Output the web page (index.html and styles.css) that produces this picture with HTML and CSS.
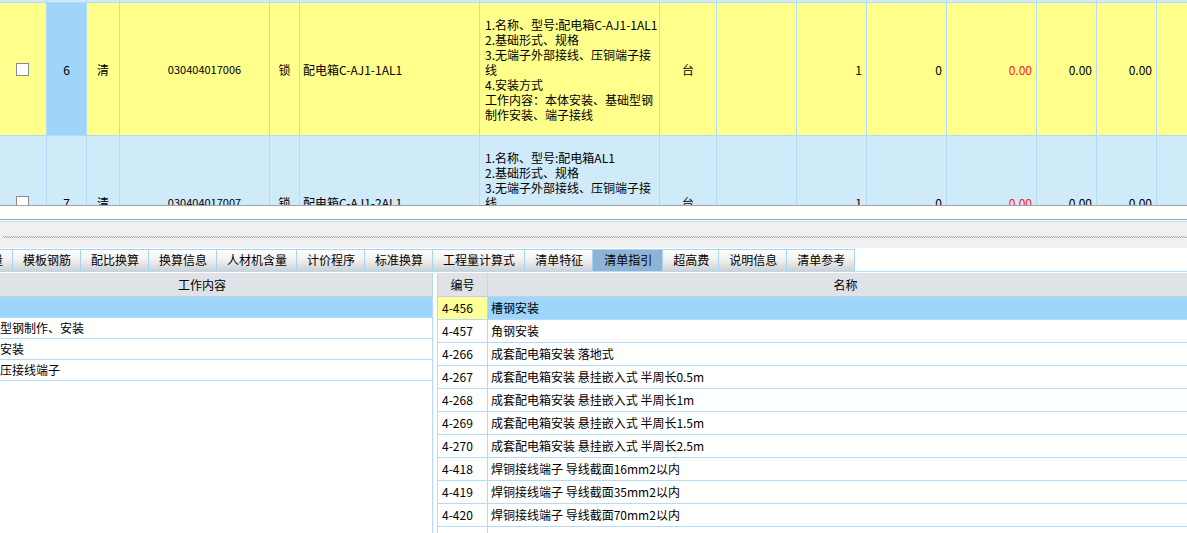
FILE: index.html
```html
<!DOCTYPE html>
<html lang="zh-CN">
<head>
<meta charset="utf-8">
<title>清单指引</title>
<link rel="stylesheet" href="styles.css">
</head>
<body>
<div class="app">
  <div class="grid-top">
    <div class="row row-prev">
      <div class="c"></div><div class="c"></div><div class="c"></div><div class="c"></div><div class="c"></div>
      <div class="c"></div><div class="c"></div><div class="c"></div><div class="c"></div><div class="c"></div>
      <div class="c"></div><div class="c"></div><div class="c"></div><div class="c"></div><div class="c"></div>
    </div>
    <div class="row row-main yellow">
      <div class="c"><span class="chk"></span></div>
      <div class="c no">6</div>
      <div class="c">清</div>
      <div class="c code">030404017006</div>
      <div class="c">锁</div>
      <div class="c left">配电箱C-AJ1-1AL1</div>
      <div class="c feat"><div><span class="nw">1.名称、型号:配电箱C-AJ1-1AL1</span><br>2.基础形式、规格<br>3.无端子外部接线、压铜端子接线<br>4.安装方式<br>工作内容：本体安装、基础型钢制作安装、端子接线</div></div>
      <div class="c">台</div>
      <div class="c"></div>
      <div class="c right">1</div>
      <div class="c right">0</div>
      <div class="c right red">0.00</div>
      <div class="c right">0.00</div>
      <div class="c right">0.00</div>
      <div class="c"></div>
    </div>
    <div class="row row-main blue">
      <div class="c"><span class="chk"></span></div>
      <div class="c no">7</div>
      <div class="c">清</div>
      <div class="c code">030404017007</div>
      <div class="c">锁</div>
      <div class="c left">配电箱C-AJ1-2AL1</div>
      <div class="c feat"><div><span class="nw">1.名称、型号:配电箱AL1</span><br>2.基础形式、规格<br>3.无端子外部接线、压铜端子接线<br>4.安装方式<br>工作内容：本体安装、基础型钢制作安装、端子接线</div></div>
      <div class="c">台</div>
      <div class="c"></div>
      <div class="c right">1</div>
      <div class="c right">0</div>
      <div class="c right red">0.00</div>
      <div class="c right">0.00</div>
      <div class="c right">0.00</div>
      <div class="c"></div>
    </div>
  </div>
  <div class="hbar"></div>
  <div class="splitter"><div class="grip"></div></div>
  <div class="tabs">
    <div class="tab">子目工程量</div>
    <div class="tab">模板钢筋</div>
    <div class="tab">配比换算</div>
    <div class="tab">换算信息</div>
    <div class="tab">人材机含量</div>
    <div class="tab">计价程序</div>
    <div class="tab">标准换算</div>
    <div class="tab">工程量计算式</div>
    <div class="tab">清单特征</div>
    <div class="tab active">清单指引</div>
    <div class="tab">超高费</div>
    <div class="tab">说明信息</div>
    <div class="tab">清单参考</div>
  </div>
  <div class="panes">
    <div class="pane-left">
      <div class="hdr">工作内容</div>
      <div class="lrow sel"></div>
      <div class="lrow">基础型钢制作、安装</div>
      <div class="lrow">本体安装</div>
      <div class="lrow">焊、压接线端子</div>
    </div>
    <div class="pane-right">
      <div class="rrow rhdr"><div class="rc">编号</div><div class="rn">名称</div></div>
      <div class="rrow first"><div class="rc">4-456</div><div class="rn">槽钢安装</div></div>
      <div class="rrow"><div class="rc">4-457</div><div class="rn">角钢安装</div></div>
      <div class="rrow"><div class="rc">4-266</div><div class="rn">成套配电箱安装 落地式</div></div>
      <div class="rrow"><div class="rc">4-267</div><div class="rn">成套配电箱安装 悬挂嵌入式 半周长0.5m</div></div>
      <div class="rrow"><div class="rc">4-268</div><div class="rn">成套配电箱安装 悬挂嵌入式 半周长1m</div></div>
      <div class="rrow"><div class="rc">4-269</div><div class="rn">成套配电箱安装 悬挂嵌入式 半周长1.5m</div></div>
      <div class="rrow"><div class="rc">4-270</div><div class="rn">成套配电箱安装 悬挂嵌入式 半周长2.5m</div></div>
      <div class="rrow"><div class="rc">4-418</div><div class="rn">焊铜接线端子 导线截面16mm2以内</div></div>
      <div class="rrow"><div class="rc">4-419</div><div class="rn">焊铜接线端子 导线截面35mm2以内</div></div>
      <div class="rrow"><div class="rc">4-420</div><div class="rn">焊铜接线端子 导线截面70mm2以内</div></div>
      <div class="rfill"><div class="rc"></div></div>
    </div>
  </div>
</div>
</body>
</html>
```

FILE: styles.css
```css
html, body {
  margin: 0;
  padding: 0;
}
body {
  width: 1187px;
  height: 533px;
  overflow: hidden;
  background: #fff;
  color: #000;
  font-family: "Noto Sans CJK SC", "Microsoft YaHei", sans-serif;
  font-size: 12px;
}
.app {
  width: 1187px;
  height: 533px;
  overflow: hidden;
  display: flex;
  flex-direction: column;
}

/* top grid */
.grid-top {
  height: 205px;
  flex: none;
  overflow: hidden;
  border-bottom: 1px solid #a3a3a3;
}
.row {
  display: grid;
  grid-template-columns: 47px 40px 33px 150px 30px 180px 180px 57px 80px 70px 80px 90px 60px 60px 60px;
  width: 1217px;
}
.c {
  box-sizing: border-box;
  border-right: 1px solid #b3dbf5;
  border-bottom: 1px solid #b3dbf5;
  display: flex;
  align-items: center;
  justify-content: center;
  overflow: hidden;
  white-space: nowrap;
  line-height: 15px;
}
.row-prev { height: 3px; }
.row-prev .c { background: #cfeaf8; }
.row-main { height: 133px; }
.yellow .c { background: #ffff8c; }
.yellow .c.no { background: #a0d5fb; }
.blue .c { background: #cfeaf8; }
.c.left { justify-content: flex-start; padding-left: 3px; }
.c.right { justify-content: flex-end; padding-right: 4px; }
.c.code { font-size: 11px; padding-left: 20px; }
.c.feat {
  justify-content: flex-start;
  white-space: normal;
  padding: 0 4px 0 5px;
}
.nw { white-space: nowrap; }
.red { color: #ff2222; }
.chk {
  width: 13px;
  height: 13px;
  box-sizing: border-box;
  border: 1px solid #8a8a8a;
  background: #fff;
  margin-right: 2px;
}

/* bars */
.hbar {
  height: 13px;
  flex: none;
  border-bottom: 1px solid #a3a3a3;
  background: #fff;
}
.splitter {
  flex: none;
  margin-top: 1px;
  border-top: 1px solid #b3dbf5;
  background: #f0f0f0;
  padding: 14px 0 0 3px;
  box-sizing: border-box;
  height: 27px;
}
.grip {
  height: 1px;
  background: repeating-linear-gradient(90deg, #a8a8a8 0 1px, transparent 1px 2px);
}
.grip::after {
  content: "";
  display: block;
  height: 1px;
  transform: translate(1px, 1px);
  background: repeating-linear-gradient(90deg, #a8a8a8 0 1px, transparent 1px 2px);
}

/* tabs */
.tabs {
  flex: none;
  display: flex;
  box-sizing: border-box;
  padding-top: 1px;
  height: 24px;
  border-bottom: 1px solid #b3dbf5;
  margin-left: -67px;
  background: #fff;
}
.tab {
  flex: none;
  height: 22px;
  box-sizing: border-box;
  padding: 0 9px 0 10px;
  border-top: 1px solid #a8d4f4;
  border-right: 1px solid #a8d4f4;
  background: linear-gradient(to bottom, #fefefe 0%, #f1f1f1 45%, #d0d0d0 100%);
  line-height: 20px;
  white-space: nowrap;
  overflow: hidden;
}
.tab.active {
  background: #8fb3d4;
  padding: 0 10px 0 11px;
}

/* lower panes */
.panes {
  flex: 1;
  display: flex;
  margin-top: 1px;
  min-height: 0;
  overflow: hidden;
}
.pane-left {
  flex: none;
  width: 461px;
  margin-left: -28px;
  box-sizing: border-box;
  border-right: 1px solid #b3dbf5;
}
.hdr {
  height: 24px;
  box-sizing: border-box;
  background: #dfe2e7;
  border-bottom: 1px solid #c6ced8;
  text-align: center;
  line-height: 23px;
}
.lrow {
  height: 21px;
  box-sizing: border-box;
  border-bottom: 1px solid #b3dbf5;
  padding-left: 4px;
  line-height: 20px;
  white-space: nowrap;
}
.lrow.sel { background: #9ed5fb; }

.pane-right {
  flex: none;
  width: 766px;
  margin-left: 4px;
  box-sizing: border-box;
  border-left: 1px solid #b3dbf5;
  display: flex;
  flex-direction: column;
}
.rrow {
  display: flex;
  flex: none;
  height: 23px;
  box-sizing: border-box;
  border-bottom: 1px solid #b3dbf5;
  line-height: 22px;
  white-space: nowrap;
}
.rc {
  flex: none;
  width: 50px;
  box-sizing: border-box;
  border-right: 1px solid #b3dbf5;
  padding-left: 4px;
}
.rn {
  flex: 1;
  padding-left: 3px;
}
.rrow.rhdr {
  height: 24px;
  background: #dfe2e7;
  border-bottom: 1px solid #c6ced8;
  line-height: 23px;
}
.rhdr .rc, .rhdr .rn {
  text-align: center;
  padding-left: 0;
}
.rhdr .rc { border-right-color: #cfd6de; }
.first .rc { background: #ffff99; }
.first .rn { background: #9ed5fb; }
.rfill {
  flex: 1;
  display: flex;
}
```
